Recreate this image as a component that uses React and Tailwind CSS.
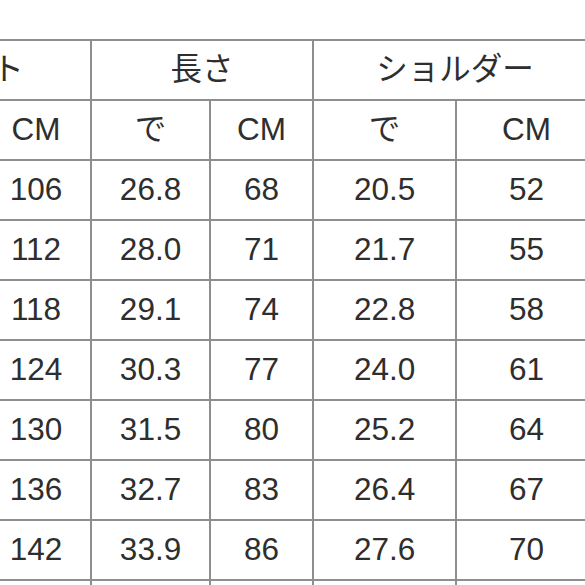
import React from "react";

const rows = [
  ["41.7", "106", "26.8", "68", "20.5", "52"],
  ["44.1", "112", "28.0", "71", "21.7", "55"],
  ["46.5", "118", "29.1", "74", "22.8", "58"],
  ["48.8", "124", "30.3", "77", "24.0", "61"],
  ["51.2", "130", "31.5", "80", "25.2", "64"],
  ["53.5", "136", "32.7", "83", "26.4", "67"],
  ["55.9", "142", "33.9", "86", "27.6", "70"],
  ["58.3", "148", "35.1", "89", "28.8", "73"],
];

const cell = "border-2 border-[#8e8e8e] h-[60px] p-0 text-center align-middle font-normal";

export default function App() {
  return (
    <div
      className="w-[585px] h-[585px] overflow-hidden bg-white text-[#2e2e2e]"
      style={{ fontFamily: '"Liberation Sans", "Noto Sans CJK JP", sans-serif' }}
    >
      <table className="table-fixed border-collapse mt-[39px] ml-[-139px] w-[735px] text-[31.5px] leading-none">
        <colgroup>
          <col className="w-[119px]" />
          <col className="w-[110px]" />
          <col className="w-[119px]" />
          <col className="w-[103px]" />
          <col className="w-[143px]" />
          <col className="w-[141px]" />
        </colgroup>
        <thead>
          <tr>
            <th colSpan={2} className={cell}>バスト</th>
            <th colSpan={2} className={cell}>長さ</th>
            <th colSpan={2} className={cell}>ショルダー</th>
          </tr>
          <tr>
            <th className={cell}>で</th>
            <th className={cell}>CM</th>
            <th className={cell}>で</th>
            <th className={cell}>CM</th>
            <th className={cell}>で</th>
            <th className={cell}>CM</th>
          </tr>
        </thead>
        <tbody>
          {rows.map((r, i) => (
            <tr key={i}>
              {r.map((v, j) => (
                <td key={j} className={cell}>{v}</td>
              ))}
            </tr>
          ))}
        </tbody>
      </table>
    </div>
  );
}
